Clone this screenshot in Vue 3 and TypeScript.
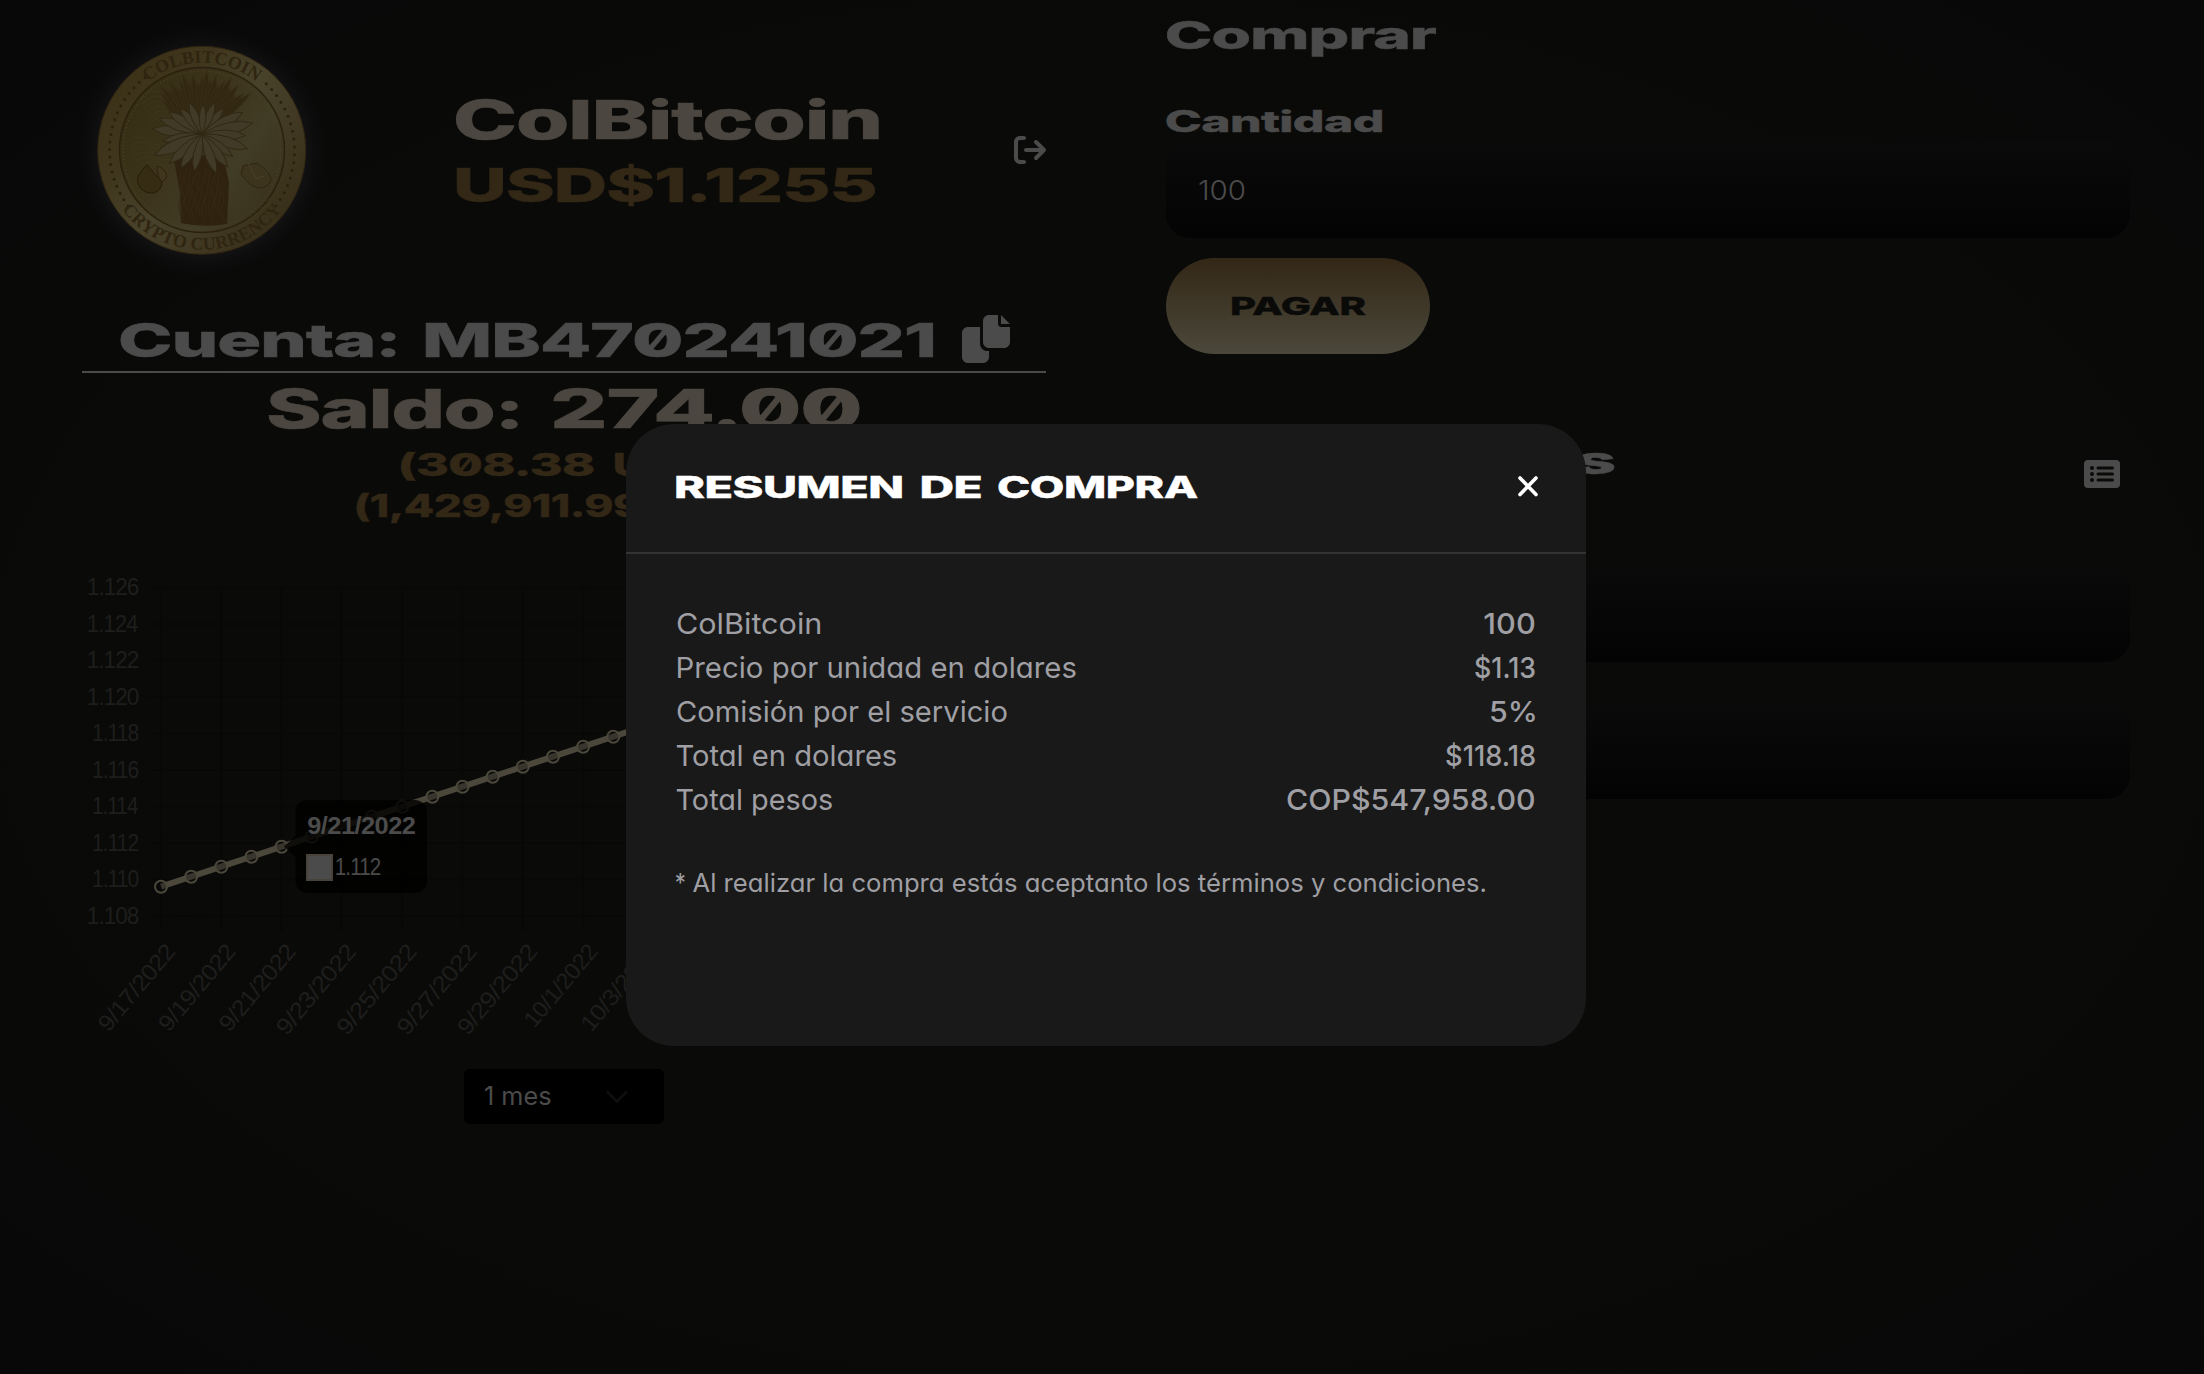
<script setup lang="ts">
import { h, type FunctionalComponent } from 'vue'

/** A run of text: content, left edge and width of its ink, in pixels. */
type Run = [text: string, x: number, width: number]

interface FitProps {
  runs: Run[]
  cap: number
  base: number
  height: number
  width?: number
  weight?: number
  family?: string
  features?: string
}

const CAP_RATIO: Record<string, number> = { Inter: 0.727, 'Liberation Sans': 0.716 }
const ctx = document.createElement('canvas').getContext('2d')!

/** Horizontal scale and origin which make the ink of a run span its given width. */
function fit(run: Run, size: number, weight: number, family: string, spacing: number) {
  ctx.font = `${weight} ${size}px "${family}"`
  ctx.letterSpacing = `${spacing}px`
  const m = ctx.measureText(run[0])
  const s = run[2] / (m.actualBoundingBoxRight + m.actualBoundingBoxLeft)
  return { s, x: run[1] + m.actualBoundingBoxLeft * s }
}

/** One line of text in the wide brand style. */
const FitText: FunctionalComponent<FitProps> = (p) => {
  const family = p.family ?? 'Inter'
  const weight = p.weight ?? 850
  const size = p.cap / CAP_RATIO[family]
  const heavy = weight >= 800
  const spacing = heavy ? -size * 0.012 : 0
  const outline = heavy ? size * 0.012 : 0
  return h(
    'svg',
    { width: p.width ?? 964, height: p.height, style: 'display:block;overflow:visible' },
    p.runs.map((run) => {
      const f = fit(run, size, weight, family, spacing)
      return h(
        'text',
        {
          transform: `translate(${f.x} ${p.base}) scale(${f.s} 1)`,
          fill: 'currentColor',
          stroke: heavy ? 'currentColor' : 'none',
          'stroke-width': outline,
          'font-family': `"${family}", sans-serif`,
          'font-size': size,
          'font-weight': weight,
          style: `letter-spacing:${spacing}px;font-feature-settings:${p.features ?? 'normal'}`,
        },
        run[0],
      )
    }),
  )
}
FitText.props = ['runs', 'cap', 'base', 'height', 'width', 'weight', 'family', 'features']

const ZERO = '"zero"'
const ROUND_A = '"cv11"'

const rows: { label: Run; value: Run }[] = [
  { label: ['ColBitcoin', 1, 143.2], value: ['100', 198.4, 50.6] },
  { label: ['Precio por unidad en dolares', 1.6, 395], value: ['$1.13', 189, 60] },
  { label: ['Comisión por el servicio', 1, 329.5], value: ['5%', 205, 44] },
  { label: ['Total en dolares', 0.5, 217], value: ['$118.18', 160, 89] },
  { label: ['Total pesos', 0.5, 154.5], value: ['COP$547,958.00', 1, 248] },
]

// Chart geometry, relative to the chart's own box
const yTicks: { text: string; x: number; w: number }[] = [
  { text: '1.126', x: 5.8, w: 50.8 },
  { text: '1.124', x: 5.8, w: 50.8 },
  { text: '1.122', x: 5.8, w: 50.6 },
  { text: '1.120', x: 5.8, w: 50.8 },
  { text: '1.118', x: 10.8, w: 45.8 },
  { text: '1.116', x: 10.8, w: 45.8 },
  { text: '1.114', x: 10.8, w: 45.8 },
  { text: '1.112', x: 10.8, w: 45.6 },
  { text: '1.110', x: 10.8, w: 45.8 },
  { text: '1.108', x: 5.8, w: 50.8 },
]
const xTicks: [string, number][] = [
  ['9/17/2022', 104], ['9/19/2022', 104], ['9/21/2022', 104], ['9/23/2022', 108.5],
  ['9/25/2022', 108.5], ['9/27/2022', 108.5], ['9/29/2022', 108.5], ['10/1/2022', 99], ['10/3/2022', 104],
]
const points = Array.from({ length: 28 }, (_, i) => ({ x: 79 + i * 30.15, y: 326.7 - i * 10 }))
const linePath = points.map((p) => `${p.x},${p.y}`).join(' ')

function chartFit(text: string, x: number, w: number, spacing: number, weight = 400): string {
  const f = fit([text, x, w], 23, weight, 'Liberation Sans', spacing)
  return `translate(${f.x} 0) scale(${f.s} 1)`
}

function ring(from: number, to: number, n: number, r: number) {
  return Array.from({ length: n }, (_, i) => {
    const a = ((from + ((to - from) * i) / (n - 1)) * Math.PI) / 180
    return { x: 120 + r * Math.cos(a), y: 150.3 + r * Math.sin(a) }
  })
}
const stars = [...ring(143, 232, 20, 92.5), ...ring(-46, 37, 18, 92.5)]
const backPetals = Array.from({ length: 23 }, (_, i) => ({ a: -50 + i * 4.55, l: 52 + ((i * 7) % 5) * 3 }))
const petals = [
  { a: -84, l: 50 }, { a: -70, l: 46 }, { a: -56, l: 40 }, { a: -40, l: 34 }, { a: 40, l: 34 },
  { a: 62, l: 46 }, { a: 78, l: 52 }, { a: 92, l: 44 }, { a: 108, l: 48 }, { a: -100, l: 40 },
  { a: -114, l: 52 }, { a: -132, l: 44 }, { a: 126, l: 38 }, { a: 142, l: 42 }, { a: -148, l: 40 },
  { a: 160, l: 42 }, { a: -168, l: 38 }, { a: -22, l: 34 }, { a: 22, l: 34 }, { a: 2, l: 30 },
]
</script>

<template>
  <div class="page">
    <main class="dash">
      <section class="col">
        <header class="head">
          <svg class="coin" width="260" height="302" viewBox="0 0 260 302">
            <defs>
              <linearGradient id="rim" x1="0" y1="0.1" x2="1" y2="0.9">
                <stop offset="0" stop-color="#393016" />
                <stop offset="0.3" stop-color="#3f361d" />
                <stop offset="0.5" stop-color="#48422b" />
                <stop offset="0.8" stop-color="#3d341e" />
                <stop offset="1" stop-color="#342a15" />
              </linearGradient>
              <linearGradient id="face" x1="0" y1="0" x2="1" y2="0.7">
                <stop offset="0" stop-color="#332a12" />
                <stop offset="0.45" stop-color="#3c331b" />
                <stop offset="0.75" stop-color="#413c25" />
                <stop offset="1" stop-color="#39311c" />
              </linearGradient>
              <radialGradient id="glow">
                <stop offset="0.75" stop-color="#151517" />
                <stop offset="0.88" stop-color="#0d0d0e" />
                <stop offset="1" stop-color="#0a0a09" stop-opacity="0" />
              </radialGradient>
              <path id="arcTop" d="M32.500 150.300a87.500 87.500 0 0 1 175 0" />
              <path id="arcBottom" d="M20.500 150.300a99.500 99.500 0 0 0 199 0" />
            </defs>
            <circle cx="120" cy="152" r="127" fill="url(#glow)" />
            <circle cx="119.7" cy="150.3" r="104" fill="url(#rim)" stroke="#30240f" stroke-width="1" />
            <circle cx="120" cy="150" r="82.5" fill="url(#face)" stroke="#2a200d" stroke-width="1.4" />
            <circle cx="120" cy="150" r="79" fill="none" stroke="#4b4226" stroke-width="1.2" stroke-dasharray="1.2 2.4" />
            <g fill="none" stroke="#423820" stroke-width="0.8" opacity="0.8">
              <path v-for="i in 7" :key="i" :d="`M${44 + i * 2} ${136 + i * 5}q12 -8 20 0t22 ${i - 3}`" />
              <path v-for="i in 6" :key="'b' + i" :d="`M${56 + i * 2} ${94 + i * 5}q10 -12 24 -6t20 -6`" />
              <path v-for="i in 6" :key="'c' + i" :d="`M150 ${178 + i * 6}q12 -8 22 -2t18 -4`" />
            </g>
            <circle v-for="(s, i) in stars" :key="i" :cx="s.x" :cy="s.y" r="1.5" fill="#2b220d" />
            <g font-family="'Liberation Serif', serif" font-weight="700" font-size="18" fill="#2f2510">
              <text><textPath href="#arcTop" startOffset="50%" text-anchor="middle">COLBITCOIN</textPath></text>
              <text letter-spacing="0.2"><textPath href="#arcBottom" startOffset="50%" text-anchor="middle">CRYPTO CURRENCY</textPath></text>
            </g>
            <path d="M92 160q25 -10 50 0l5 22 -2 42q-24 4 -46 -1l-1 -30z" fill="#2f2310" />
            <g stroke="#362a14" stroke-width="0.8" fill="none">
              <path v-for="i in 14" :key="i" :d="`M${95 + i * 3.3} ${168 + (i % 3) * 4}l-2 12 3 10 -3 12 2 10`" />
            </g>
            <g transform="translate(120 134)">
              <path v-for="(p, i) in backPetals" :key="i" :transform="`rotate(${p.a})`" :d="`M-3 0Q-6 ${-p.l * 0.7} 0 ${-p.l}Q6 ${-p.l * 0.7} 3 0z`" fill="#322812" stroke="#3a2f18" stroke-width="0.7" />
              <path v-for="p in petals" :key="p.a" :transform="`rotate(${p.a})`" :d="`M0 0Q${-p.l * 0.22} ${-p.l * 0.6} 0 ${-p.l}Q${p.l * 0.22} ${-p.l * 0.6} 0 0z`" fill="#403a26" stroke="#302712" stroke-width="0.9" />
            </g>
            <path d="M65 165q-12 11 -9 19q5 10 15 9q9 -2 9 -12q-6 -5 -15 -16z" fill="#362b13" stroke="#261c0a" />
            <path d="M75 166q9 3 10 11l-5 5q-5 -5 -5 -16z" fill="#40361d" stroke="#2d220e" />
            <path d="M175 163l-14 3 -2 8q8 12 17 14q10 0 13 -8q0 -8 -14 -17z" fill="#3d341d" stroke="#2f2510" />
            <path d="M166 163l8 16 8 -3" fill="none" stroke="#4a4128" />
          </svg>
          <div class="title">
            <FitText class="cream" :runs="[['ColBitcoin', 0.2, 423.4]]" :cap="39" :base="50" :height="66" :width="460" />
            <FitText class="gold" :runs="[['USD$1.1255', 0.2, 418.8]]" :cap="34.2" :base="47" :height="60" :width="460" />
          </div>
          <svg class="exit" width="32" height="32" viewBox="0 0 512 512" fill="currentColor">
            <path d="M160 96c17.700 0 32-14.300 32-32s-14.300-32-32-32H96C43 32 0 75 0 128V384c0 53 43 96 96 96h64c17.700 0 32-14.300 32-32s-14.300-32-32-32H96c-17.700 0-32-14.300-32-32V128c0-17.700 14.300-32 32-32h64zM502.600 278.600c12.500-12.500 12.500-32.800 0-45.300l-128-128c-12.500-12.500-32.800-12.500-45.300 0s-12.500 32.800 0 45.300L402.700 224H192c-17.700 0-32 14.300-32 32s14.300 32 32 32H402.700l-73.400 73.400c-12.500 12.500-12.500 32.800 0 45.300s32.800 12.500 45.300 0l128-128z" />
          </svg>
        </header>
        <div class="account">
          <FitText :runs="[['Cuenta:', 37.7, 276.3], ['MB470241021', 343.2, 507.8]]" :cap="33.7" :base="55" :height="69" :width="880" :features="ZERO" />
          <svg class="copy" width="48" height="48" viewBox="0 0 512 512" fill="currentColor">
            <path d="M288 0c-35.300 0-64 28.700-64 64V288c0 35.300 28.700 64 64 64H448c35.300 0 64-28.700 64-64V128H416c-17.700 0-32-14.300-32-32V0H288zM416 0V96H512z" />
            <path d="M64 128H192V300c0 50 34 84 84 84H288v64c0 35-29 64-64 64H64c-35 0-64-29-64-64V192c0-35 29-64 64-64z" />
          </svg>
        </div>
        <FitText class="cream" :runs="[['Saldo:', 185.7, 250.6], ['274.00', 471.4, 306.1]]" :cap="38.7" :base="54.700" :height="76" :features="ZERO" />
        <FitText class="gold" :runs="[['(308.38', 318.6, 193.4], ['USD)', 532, 112]]" :cap="22.800" :base="27.300" :height="41" :features="ZERO" />
        <FitText class="gold" :runs="[['(1,429,911.99', 274.2, 285], ['COP)', 580, 109]]" :cap="22.800" :base="27" :height="70" :features="ZERO" />

        <svg class="chart" width="964" height="509" font-family="'Liberation Sans', sans-serif" font-size="23">
          <g stroke="#080807" stroke-width="2">
            <path v-for="i in 10" :key="i" :d="`M66 ${27.500 + (i - 1) * 36.5}H900`" />
            <path v-for="i in 14" :key="'v' + i" :d="`M${79 + (i - 1) * 60.3} 27V371`" />
          </g>
          <g fill="#1e1e1d">
            <g v-for="(t, i) in yTicks" :key="t.text" :transform="`translate(0 ${35 + i * 36.5})`">
              <text letter-spacing="-1" :transform="chartFit(t.text, t.x, t.w, -1)">{{ t.text }}</text>
            </g>
            <g v-for="(t, i) in xTicks" :key="t[0]" :transform="`translate(${94 + i * 60.35} 392.500) rotate(-50)`">
              <text letter-spacing="-0.5" :transform="chartFit(t[0], -t[1], t[1], -0.5)">{{ t[0] }}</text>
            </g>
          </g>
          <polyline :points="linePath" fill="none" stroke="#4b483b" stroke-width="6" />
          <circle v-for="(p, i) in points" :key="i" :cx="p.x" :cy="p.y" r="6" fill="#0a0a09" fill-opacity="0.3" stroke="#4b483b" stroke-width="2" />
          <path d="M225.500 240H333a12 12 0 0 1 12 12V321a12 12 0 0 1 -12 12H225.500a12 12 0 0 1 -12 -12V297L202 286.500L213.500 276V252a12 12 0 0 1 12 -12z" fill="#000" fill-opacity="0.8" />
          <g fill="#4b4b4b">
            <g transform="translate(0 274)" font-weight="700"><text letter-spacing="-0.5" :transform="chartFit('9/21/2022', 225.300, 107.7, -0.5, 700)">9/21/2022</text></g>
            <g transform="translate(0 314.700)"><text letter-spacing="-1" :transform="chartFit('1.112', 253.700, 44.8, -1)">1.112</text></g>
          </g>
          <rect x="225" y="295" width="25" height="25" fill="#4b4b4b" stroke="#47433a" stroke-width="2" />
        </svg>

        <div class="select">
          <FitText :runs="[['1 mes', 21, 66]]" :cap="18.5" :base="36" :height="55" :width="142" :weight="400" />
          <svg width="22" height="14" fill="none" stroke="#0f0f0f" stroke-width="2.5"><path d="M1 1.500l10 10 10 -10" /></svg>
        </div>
      </section>

      <section class="col">
        <FitText :runs="[['Comprar', 0.5, 270]]" :cap="28" :base="49.300" :height="100" />
        <FitText :runs="[['Cantidad', 0.5, 216.5]]" :cap="21.5" :base="32" :height="42" />
        <div class="field">
          <FitText :runs="[['100', 33, 46]]" :cap="20" :base="58" :height="96" :weight="350" />
        </div>
        <button class="pay">
          <FitText :runs="[['PAGAR', 65.5, 134]]" :cap="18" :base="57" :height="96" :width="264" />
        </button>
        <div class="moves">
          <FitText :runs="[['Movimientos', 0.5, 447.600]]" :cap="28" :base="33.500" :height="60" :width="918" />
          <svg class="list" width="36" height="28" viewBox="0 0 36 28">
            <rect width="36" height="28" rx="4" fill="currentColor" />
            <g fill="#0a0a09">
              <g v-for="y in [8, 14, 20]" :key="y">
                <circle cx="8" :cy="y" r="2" />
                <rect x="12.500" :y="y - 1.500" width="17.5" height="3" rx="1.5" />
              </g>
            </g>
          </svg>
        </div>
        <div class="field"></div>
        <div class="field second"></div>
      </section>
    </main>

    <div class="modal">
      <div class="modal-head">
        <FitText :runs="[['RESUMEN', 0.5, 226], ['DE', 246, 60], ['COMPRA', 323.500, 200]]" :cap="21.5" :base="74" :height="128" :width="842" />
        <svg class="close" width="22" height="22" fill="none" stroke="currentColor" stroke-width="3.600" stroke-linecap="round"><path d="M3 3l16 16.500M19 3L3 19.500" /></svg>
      </div>
      <div class="modal-body">
        <div v-for="r in rows" :key="r.label[0]" class="row">
          <FitText :runs="[r.label]" :cap="21" :base="32" :height="44" :width="420" :weight="400" :features="ROUND_A" />
          <FitText :runs="[r.value]" :cap="21" :base="32" :height="44" :width="250" :weight="500" />
        </div>
        <FitText class="note" :runs="[['*', -0.4, 9.4], ['Al realizar la compra estás aceptanto los términos y condiciones.', 16.5, 785.3]]" :cap="18.800" :base="38" :height="60" :width="860" :weight="400" :features="ROUND_A" />
      </div>
    </div>
  </div>
</template>

<style>
body {
  margin: 0;
  background: #0a0a08;
}
</style>

<style scoped>
.page {
  position: relative;
  width: 2204px;
  height: 1374px;
  overflow: hidden;
  background: radial-gradient(ellipse at 50% 50%, #0a0a09 60%, #080808 100%);
  font-family: Inter, sans-serif;
  color: #4b4b4b;
}
.dash {
  display: flex;
  gap: 120px;
  padding: 0 74px 0 82px;
}
.col {
  width: 964px;
  display: flex;
  flex-direction: column;
}
.head {
  display: flex;
  height: 302px;
}
.coin {
  flex: none;
  overflow: visible;
}
.title {
  width: 558px;
  padding: 89px 0 0 114px;
}
.exit {
  flex: none;
  margin-top: 134px;
}
.cream {
  color: #4b463f;
}
.gold {
  color: #332716;
}
.account {
  display: flex;
  height: 69px;
  border-bottom: 2px solid #4b4b4b;
}
.copy {
  margin-top: 13px;
}
.chart {
  display: block;
  overflow: visible;
}
.select {
  width: 200px;
  height: 55px;
  margin-left: 382px;
  border-radius: 6px;
  background: #000;
  display: flex;
  align-items: center;
}
.field {
  height: 96px;
  border-radius: 24px;
  background: linear-gradient(#0a0a0b, #030303);
}
.second {
  margin-top: 41px;
}
.pay {
  width: 264px;
  height: 96px;
  margin: 20px 0 0;
  padding: 0;
  border: 0;
  border-radius: 48px;
  background: linear-gradient(#332716, #4b483b);
  color: #0a0a09;
}
.moves {
  display: flex;
  height: 126px;
  padding-top: 86px;
}
.moves > :first-child {
  flex: none;
}
.list {
  flex: none;
  margin-top: 20px;
}
.modal {
  position: absolute;
  left: 626px;
  top: 424px;
  width: 960px;
  height: 622px;
  border-radius: 48px;
  background: #191919;
  overflow: hidden;
}
.modal-head {
  display: flex;
  height: 128px;
  padding-left: 49px;
  border-bottom: 2px solid #333;
  color: #fff;
}
.close {
  flex: none;
  margin-top: 51px;
}
.modal-body {
  padding: 48px 50px 0;
  color: #9f9fa4;
}
.row {
  display: flex;
  justify-content: space-between;
}
.note {
  margin-top: 32px;
}
</style>
